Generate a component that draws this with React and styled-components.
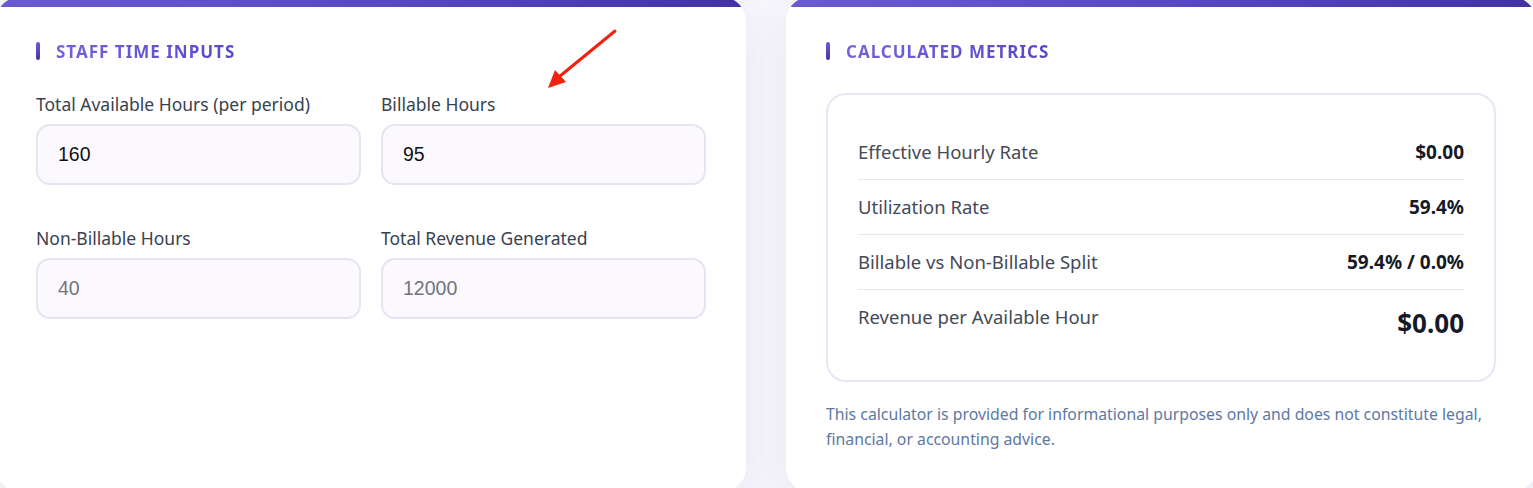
import React from "react";
import styled, { createGlobalStyle } from "styled-components";

const Global = createGlobalStyle`
  html, body { margin: 0; padding: 0; background: #f7f6fb; }
  body { font-family: "Noto Sans", "Open Sans", sans-serif; overflow: hidden; }
  * { box-sizing: border-box; }
`;

const Page = styled.div`
  display: grid;
  grid-template-columns: 750px 750px;
  column-gap: 40px;
  margin: -3px 0 0 -4px;
  width: 1540px;
`;

const Card = styled.section`
  position: relative;
  background: #ffffff;
  border-radius: 24px;
  overflow: hidden;
  box-shadow: 0 12px 40px rgba(90, 80, 170, 0.09);
  display: flex;
  flex-direction: column;
`;

const TopBar = styled.div`
  height: 10px;
  background: linear-gradient(90deg, #6b5bd0 0%, #5846c2 55%, #4232a3 100%);
`;

const Body = styled.div`
  padding: 34px 40px 40px;
  display: flex;
  flex-direction: column;
`;

const Heading = styled.h2`
  display: flex;
  align-items: center;
  gap: 16px;
  margin: 0 0 32px;
  height: 20px;
  font-size: 17px;
  font-weight: 700;
  letter-spacing: 1px;
  text-transform: uppercase;
`;

const Marker = styled.span`
  width: 4px;
  height: 18px;
  border-radius: 3px;
  background: linear-gradient(180deg, #6b5bd0, #4534a8);
`;

const HeadingText = styled.span`
  background: linear-gradient(90deg, #7464da, #5548c8);
  -webkit-background-clip: text;
  background-clip: text;
  color: transparent;
`;

const FieldGrid = styled.div`
  display: grid;
  grid-template-columns: 1fr 1fr;
  column-gap: 20px;
  row-gap: 42px;
`;

const Field = styled.label`
  display: flex;
  flex-direction: column;
  gap: 9px;
`;

const Label = styled.span`
  font-size: 17.5px;
  line-height: 22px;
  font-weight: 400;
  color: #38424f;
`;

const Input = styled.input`
  height: 61px;
  border: 2px solid #e4e5f2;
  border-radius: 14px;
  background: #fbf9fe;
  padding: 0 20px;
  font-family: "Liberation Sans", Arial, sans-serif;
  font-size: 19.5px;
  color: #111111;
  outline: none;
  &::placeholder { color: #71757f; }
`;

const Arrow = styled.svg`
  position: absolute;
  left: 540px;
  top: 28px;
  width: 84px;
  height: 72px;
  pointer-events: none;
`;

const MetricsBox = styled.div`
  border: 2px solid #e6e7f4;
  border-radius: 20px;
  padding: 30px 30px 30px;
  display: flex;
  flex-direction: column;
`;

const Row = styled.div`
  display: flex;
  justify-content: space-between;
  align-items: ${(p) => (p.$total ? "flex-start" : "center")};
  padding: ${(p) => (p.$total ? "16px 0 10px" : "16px 0")};
  border-bottom: ${(p) => (p.$total ? "none" : "1px solid #e6e8f1")};
`;

const RowLabel = styled.span`
  font-size: 18.5px;
  line-height: 22px;
  color: #444a58;
`;

const RowValue = styled.span`
  font-size: ${(p) => (p.$total ? "26px" : "19px")};
  line-height: ${(p) => (p.$total ? "34px" : "22px")};
  font-weight: 700;
  color: #161a28;
`;

const Disclaimer = styled.p`
  margin: 20px 0 0;
  font-size: 15.8px;
  line-height: 25px;
  color: #5d78a3;
`;

const fields = [
  { label: "Total Available Hours (per period)", value: "160" },
  { label: "Billable Hours", value: "95" },
  { label: "Non-Billable Hours", placeholder: "40" },
  { label: "Total Revenue Generated", placeholder: "12000" },
];

const metrics = [
  { label: "Effective Hourly Rate", value: "$0.00" },
  { label: "Utilization Rate", value: "59.4%" },
  { label: "Billable vs Non-Billable Split", value: "59.4% / 0.0%" },
  { label: "Revenue per Available Hour", value: "$0.00", total: true },
];

export default function App() {
  return (
    <>
      <Global />
      <Page>
        <Card>
          <TopBar />
          <Body>
            <Heading>
              <Marker />
              <HeadingText>Staff Time Inputs</HeadingText>
            </Heading>
            <FieldGrid>
              {fields.map((f) => (
                <Field key={f.label}>
                  <Label>{f.label}</Label>
                  <Input
                    type="text"
                    defaultValue={f.value}
                    placeholder={f.placeholder}
                  />
                </Field>
              ))}
            </FieldGrid>
          </Body>
          <Arrow viewBox="0 0 84 72">
            <line x1="79" y1="6" x2="18" y2="56" stroke="#f0220f" strokeWidth="3" strokeLinecap="round" />
            <polygon points="12,63 19,45 30,57" fill="#f0220f" />
          </Arrow>
        </Card>
        <Card>
          <TopBar />
          <Body>
            <Heading>
              <Marker />
              <HeadingText>Calculated Metrics</HeadingText>
            </Heading>
            <MetricsBox>
              {metrics.map((m) => (
                <Row key={m.label} $total={m.total}>
                  <RowLabel>{m.label}</RowLabel>
                  <RowValue $total={m.total}>{m.value}</RowValue>
                </Row>
              ))}
            </MetricsBox>
            <Disclaimer>
              This calculator is provided for informational purposes only and does not constitute legal, financial, or accounting advice.
            </Disclaimer>
          </Body>
        </Card>
      </Page>
    </>
  );
}
